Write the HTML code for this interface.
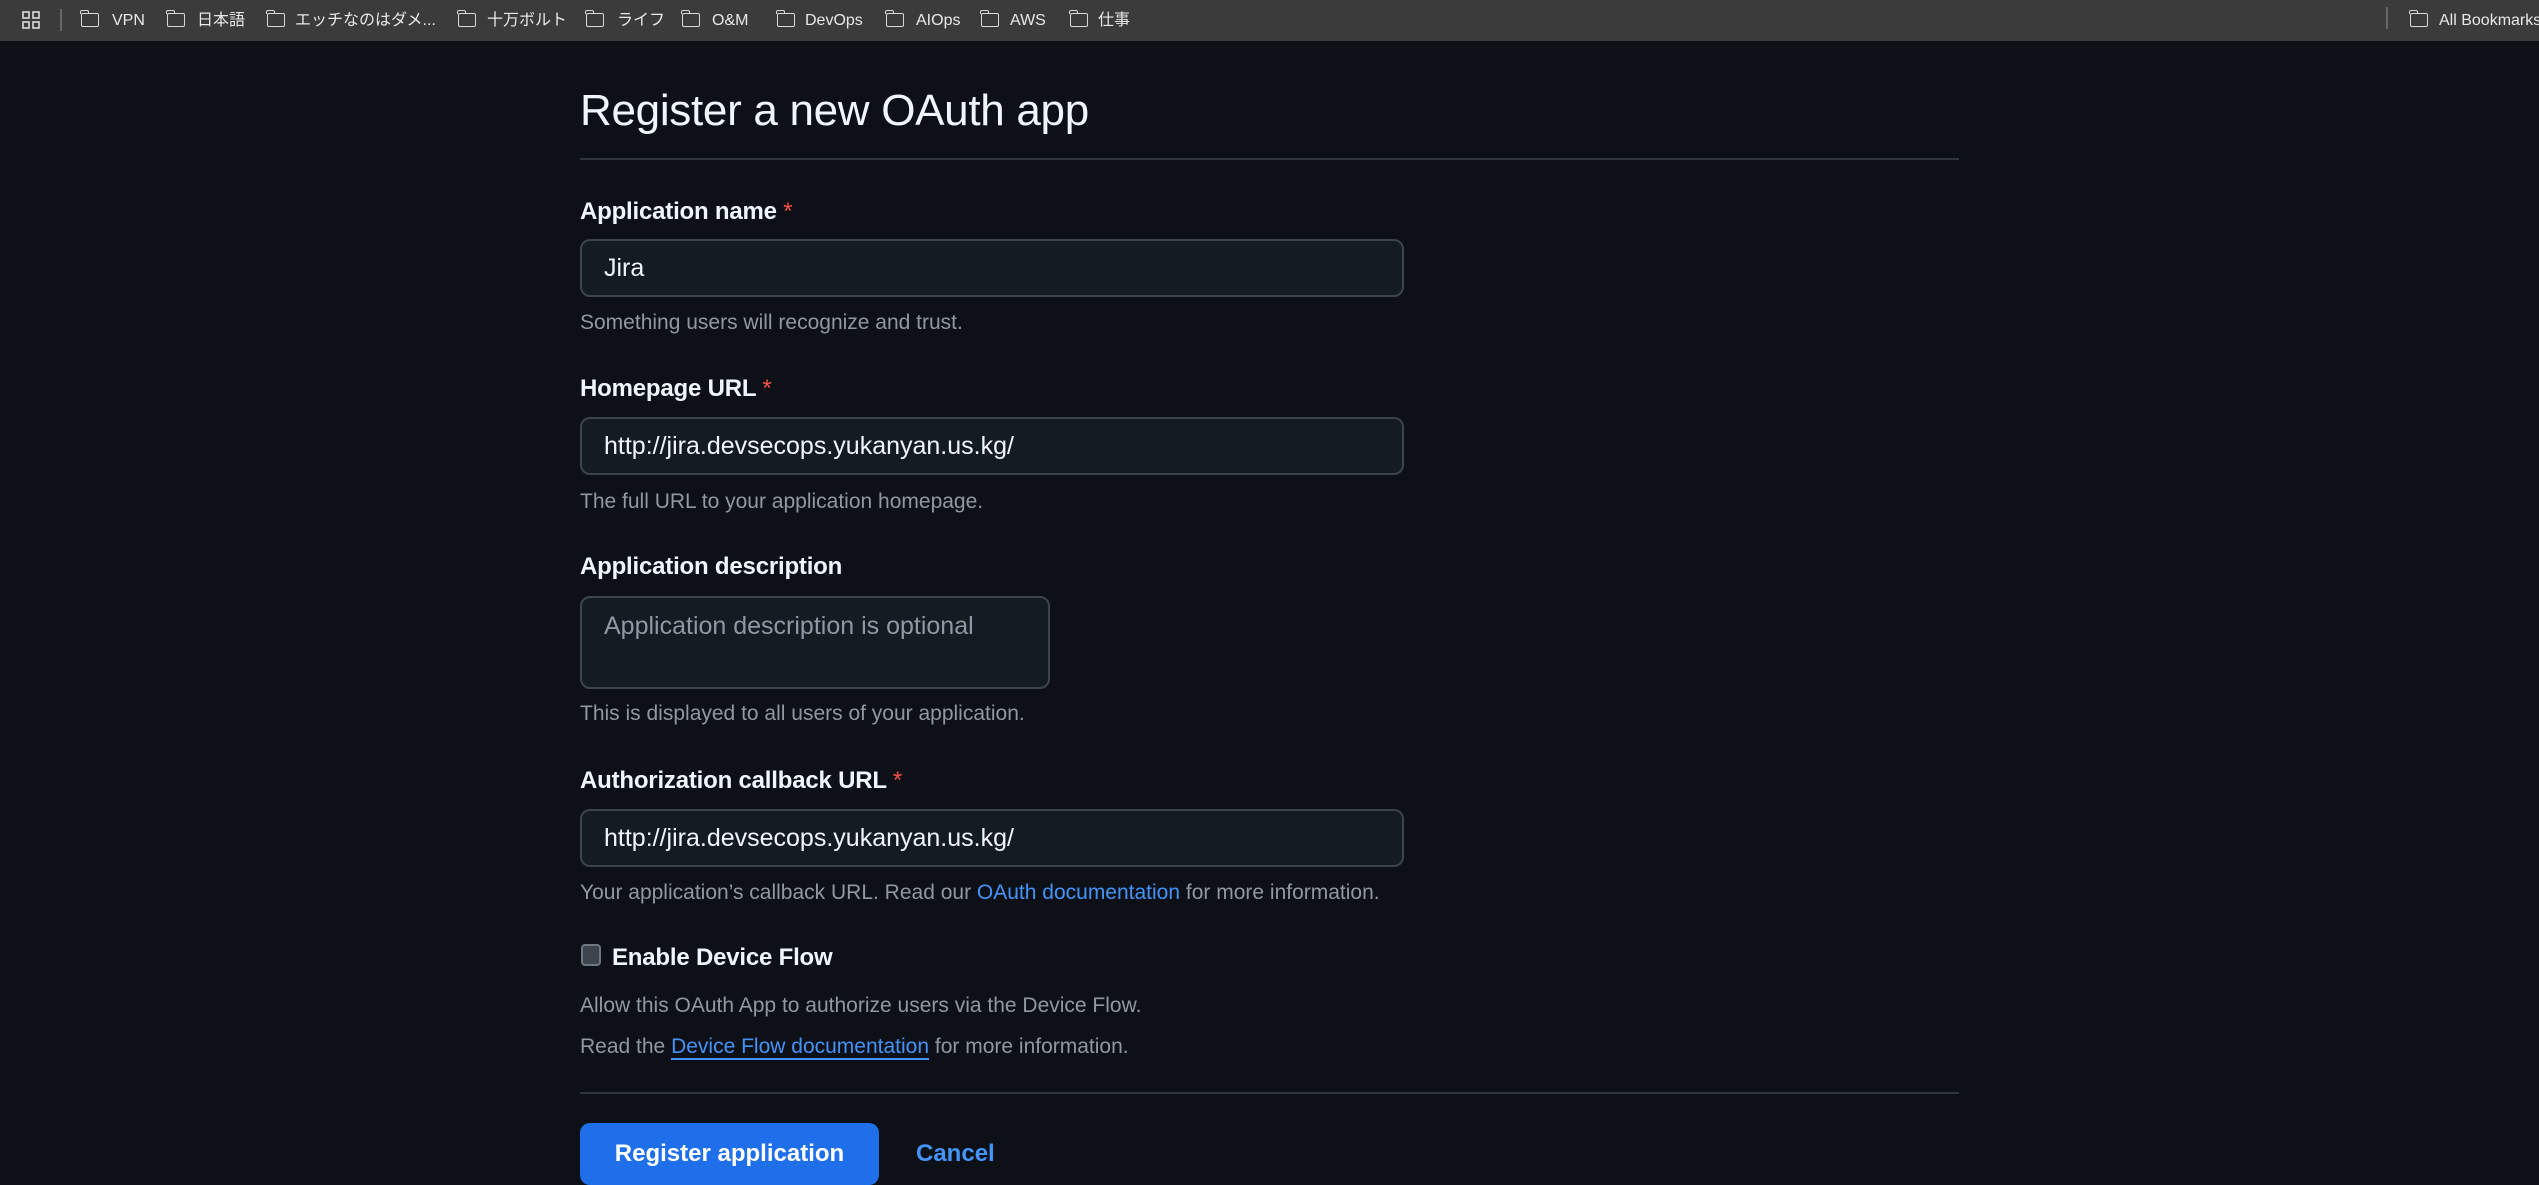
<!DOCTYPE html>
<html><head><meta charset="utf-8"><style>
*{box-sizing:border-box;margin:0;padding:0}
body{width:2539px;height:1182px;overflow:hidden;background:#0d1117;font-family:"Liberation Sans","Noto Sans CJK JP",sans-serif;color:#f0f6fc;position:relative}
.bar{position:absolute;left:0;top:0;width:2539px;height:41px;background:#3b3b3b}
.bm{position:absolute;top:0;height:41px;line-height:41px;font-size:16px;color:#e8e8e8;white-space:nowrap}
.fd{position:absolute;top:13px;width:18px;height:14px;border:1.6px solid #d8d8d8;border-radius:2px}
.fd:before{content:"";position:absolute;left:-1.6px;top:-4px;width:7px;height:3px;border:1.6px solid #d8d8d8;border-bottom:none;border-radius:2px 2px 0 0}
.a{position:absolute;white-space:nowrap}
.h1{left:580px;top:86px;font-size:44px;color:#f0f6fc;letter-spacing:-0.3px}
.hr{position:absolute;left:580px;width:1379px;height:2px;background:#30363d}
.lbl{font-size:24px;font-weight:bold;left:580px;letter-spacing:-0.2px}
.req{color:#f85149;font-weight:normal}
.inp{position:absolute;left:580px;width:824px;height:58px;background:#151b23;border:2px solid #3d444d;border-radius:10px;font-size:25px;color:#f0f6fc;padding-left:22px;line-height:54px}
.help{font-size:21px;color:#9198a1;left:580px}
a{color:#4493f8;text-decoration:none}
</style></head><body>
<div class="bar"></div>
<svg class="a" style="left:21px;top:10px" width="20" height="20" viewBox="0 0 20 20" fill="none" stroke="#ddd" stroke-width="1.6"><rect x="2" y="2" width="6" height="6"/><rect x="12" y="2" width="6" height="6"/><rect x="2" y="12" width="6" height="6"/><rect x="12" y="12" width="6" height="6"/></svg>
<div class="a" style="left:60px;top:9px;width:2px;height:22px;background:#666"></div>
<div class="fd" style="left:81px"></div><div class="bm" style="left:112px">VPN</div>
<div class="fd" style="left:167px"></div><div class="bm" style="left:197px">日本語</div>
<div class="fd" style="left:267px"></div><div class="bm" style="left:295px">エッチなのはダメ...</div>
<div class="fd" style="left:458px"></div><div class="bm" style="left:487px">十万ボルト</div>
<div class="fd" style="left:586px"></div><div class="bm" style="left:617px">ライフ</div>
<div class="fd" style="left:682px"></div><div class="bm" style="left:712px">O&amp;M</div>
<div class="fd" style="left:777px"></div><div class="bm" style="left:805px">DevOps</div>
<div class="fd" style="left:886px"></div><div class="bm" style="left:916px">AIOps</div>
<div class="fd" style="left:981px"></div><div class="bm" style="left:1010px">AWS</div>
<div class="fd" style="left:1070px"></div><div class="bm" style="left:1098px">仕事</div>
<div class="a" style="left:2386px;top:7px;width:2px;height:22px;background:#666"></div>
<div class="fd" style="left:2410px"></div><div class="bm" style="left:2439px">All Bookmarks</div>

<div class="a h1">Register a new OAuth app</div>
<div class="hr" style="top:158px"></div>

<div class="a lbl" style="top:198px">Application name <span class="req">*</span></div>
<div class="inp" style="top:239px">Jira</div>
<div class="a help" style="top:311px">Something users will recognize and trust.</div>

<div class="a lbl" style="top:375px">Homepage URL <span class="req">*</span></div>
<div class="inp" style="top:417px">http://jira.devsecops.yukanyan.us.kg/</div>
<div class="a help" style="top:490px">The full URL to your application homepage.</div>

<div class="a lbl" style="top:553px">Application description</div>
<div class="inp" style="top:596px;width:470px;height:93px;line-height:56px;color:#9198a1">Application description is optional</div>
<div class="a help" style="top:702px">This is displayed to all users of your application.</div>

<div class="a lbl" style="top:767px">Authorization callback URL <span class="req">*</span></div>
<div class="inp" style="top:809px">http://jira.devsecops.yukanyan.us.kg/</div>
<div class="a help" style="top:881px">Your application’s callback URL. Read our <a>OAuth documentation</a> for more information.</div>

<div class="a" style="left:581px;top:944px;width:20px;height:22px;border:2px solid #6e7681;border-radius:4px;background:#3d444d"></div>
<div class="a lbl" style="left:612px;top:944px">Enable Device Flow</div>
<div class="a help" style="top:994px">Allow this OAuth App to authorize users via the Device Flow.</div>
<div class="a help" style="top:1035px">Read the <a style="border-bottom:2px solid #4493f8">Device Flow documentation</a> for more information.</div>

<div class="hr" style="top:1092px"></div>
<div class="a" style="left:580px;top:1123px;width:299px;height:62px;background:#1f6feb;border-radius:10px;color:#fff;font-size:24px;font-weight:bold;text-align:center;line-height:62px">Register application</div>
<div class="a" style="left:916px;top:1140px;font-size:24px;font-weight:bold;color:#4493f8">Cancel</div>
</body></html>
